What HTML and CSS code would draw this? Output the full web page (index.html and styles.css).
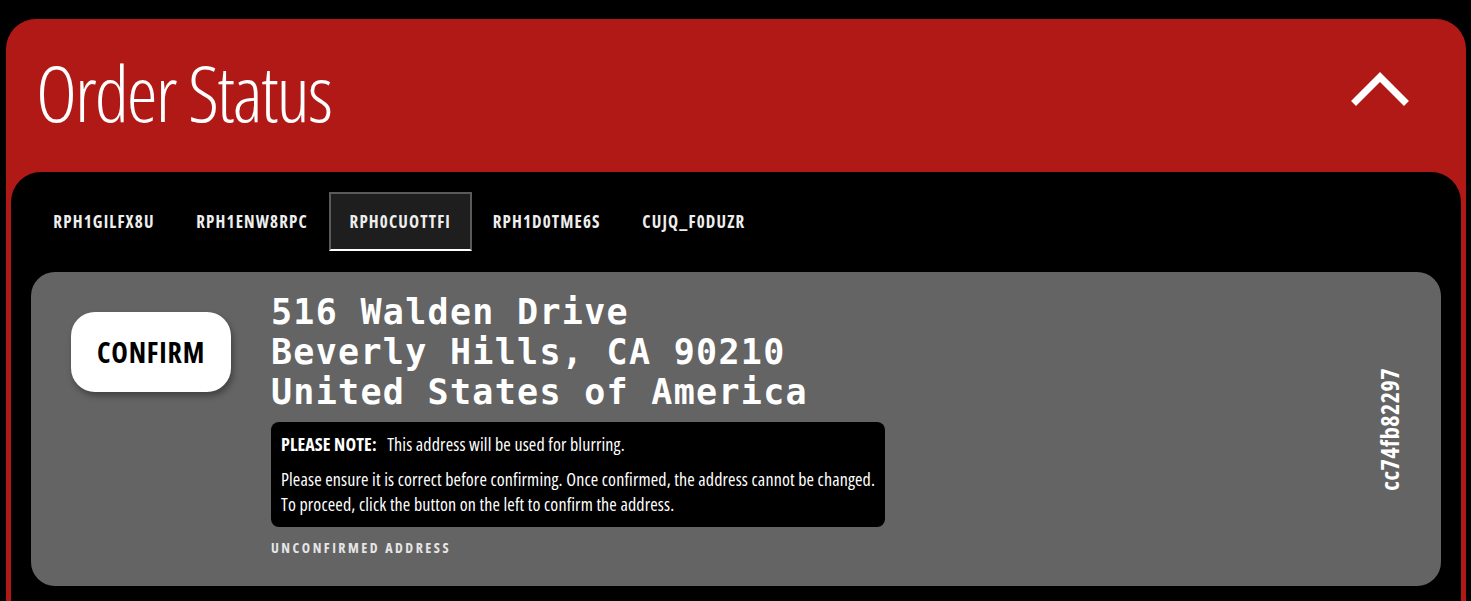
FILE: index.html
```html
<!DOCTYPE html>
<html lang="en">
<head>
<meta charset="utf-8">
<title>Order Status</title>
<link rel="stylesheet" href="styles.css">
</head>
<body>
<div class="panel">
  <header class="panel-head">
    <h1 class="panel-title">Order Status</h1>
    <button class="collapse" aria-label="Collapse">
      <svg width="60" height="40" viewBox="0 0 60 40"><polyline points="6,31 30,7 54,31" fill="none" stroke="#fff" stroke-width="7" stroke-linecap="square"/></svg>
    </button>
  </header>
  <div class="panel-body">
    <nav class="tabs">
      <a class="tab">RPH1GILFX8U</a>
      <a class="tab">RPH1ENW8RPC</a>
      <a class="tab active">RPH0CUOTTFI</a>
      <a class="tab">RPH1D0TME6S</a>
      <a class="tab">CUJQ_F0DUZR</a>
    </nav>
    <section class="card">
      <div class="card-action">
        <button class="confirm">CONFIRM</button>
      </div>
      <div class="card-main">
        <address class="addr">516 Walden Drive<br>Beverly Hills, CA 90210<br>United States of America</address>
        <div class="note">
          <p><strong>PLEASE NOTE:</strong>&nbsp;&nbsp; This address will be used for blurring.</p>
          <p>Please ensure it is correct before confirming. Once confirmed, the address cannot be changed.<br>To proceed, click the button on the left to confirm the address.</p>
        </div>
        <div class="status">UNCONFIRMED ADDRESS</div>
      </div>
      <div class="card-id"><span>cc74fb82297</span></div>
    </section>
  </div>
</div>
</body>
</html>
```
FILE: styles.css
```css
html, body {
  margin: 0;
  padding: 0;
  background: #000;
  overflow: hidden;
  height: 100%;
}
body {
  font-family: "Open Sans", sans-serif;
  color: #fff;
}
.panel {
  margin: 19px 5px 0 6px;
  background: #b01915;
  border-radius: 30px 30px 0 0;
}
.panel-head {
  height: 153px;
  display: flex;
  align-items: center;
  justify-content: space-between;
  padding: 0 56px 0 30px;
}
.panel-title {
  margin: 0 0 8px 0;
  font-family: "Open Sans", sans-serif;
  font-stretch: 75%;
  font-weight: 300;
  font-size: 78px;
  letter-spacing: -2px;
  line-height: 1;
  color: #fff;
}
.collapse {
  background: none;
  border: 0;
  padding: 0;
  display: flex;
  margin-bottom: 12px;
}
.panel-body {
  margin: 0 5px;
  background: #000;
  border-radius: 30px 30px 0 0;
  padding: 20px 20px 40px;
}
.tabs {
  display: flex;
  height: 59px;
  padding-left: 1.5px;
}
.tab {
  display: flex;
  align-items: center;
  padding: 0 18.8px;
  font-stretch: 75%;
  font-weight: 700;
  font-size: 17px;
  letter-spacing: 1.15px;
  color: #eee;
  border: 2px solid transparent;
}
.tab.active {
  background: #1e1e1e;
  border-color: #5a5a5a;
  border-bottom-color: #fff;
}
.card {
  margin-top: 21px;
  background: #646464;
  border-radius: 24px;
  height: 314px;
  box-sizing: border-box;
  padding: 20px 40px;
  display: flex;
  gap: 40px;
}
.card-action {
  padding-top: 20px;
}
.confirm {
  width: 160px;
  height: 80px;
  border: 0;
  border-radius: 24px;
  background: #fff;
  color: #000;
  font-family: "Open Sans", sans-serif;
  font-stretch: 75%;
  font-weight: 700;
  font-size: 28px;
  letter-spacing: 0.8px;
  box-shadow: 2px 4px 6px rgba(0,0,0,0.35);
}
.card-main {
  flex: 1;
}
.addr {
  font-style: normal;
  font-family: "DejaVu Sans Mono", monospace;
  font-weight: 700;
  font-size: 35px;
  letter-spacing: 1.3px;
  line-height: 40px;
  color: #fff;
}
.note {
  margin-top: 10px;
  width: fit-content;
  background: #000;
  border-radius: 8px;
  padding: 10px;
  font-stretch: 75%;
  font-size: 18px;
  letter-spacing: 0.14px;
  line-height: 25px;
}
.note p {
  margin: 0;
}
.note p + p {
  margin-top: 10px;
}
.note strong {
  font-weight: 700;
}
.status {
  margin-top: 11px;
  font-stretch: 75%;
  font-weight: 700;
  font-size: 14px;
  letter-spacing: 2.5px;
  line-height: 20px;
  color: #e6e6e6;
}
.card-id {
  display: flex;
  align-items: center;
  justify-content: center;
  width: 24px;
}
.card-id span {
  writing-mode: vertical-rl;
  transform: rotate(180deg);
  font-stretch: 75%;
  font-weight: 700;
  font-size: 24px;
  letter-spacing: 0.5px;
}
```
